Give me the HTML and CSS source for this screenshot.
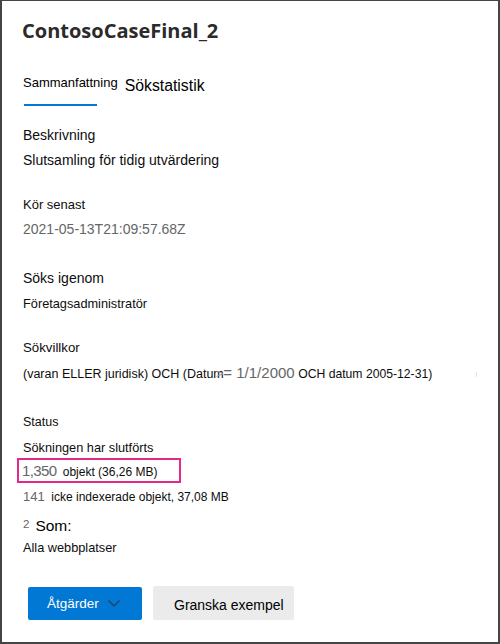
FILE: index.html
```html
<!DOCTYPE html>
<html lang="sv">
<head>
<meta charset="utf-8">
<title>ContosoCaseFinal_2</title>
<link rel="stylesheet" href="styles.css">
</head>
<body>
<div class="frame">
  <h1 class="title">ContosoCaseFinal_2</h1>
  <div class="tabs">
    <div class="tab tab-active">
      <span class="tab-label">Sammanfattning</span>
      <span class="tab-underline"></span>
    </div>
    <div class="tab tab-second">Sökstatistik</div>
  </div>

  <section class="field f-desc">
    <div class="line s14">Beskrivning</div>
    <div class="line s14">Slutsamling för tidig utvärdering</div>
  </section>

  <section class="field f-run">
    <div class="line s13">Kör senast</div>
    <div class="line s14 muted">2021-05-13T21:09:57.68Z</div>
  </section>

  <section class="field f-searched">
    <div class="line s14">Söks igenom</div>
    <div class="line s1275">Företagsadministratör</div>
  </section>

  <section class="field f-cond">
    <div class="line s1325">Sökvillkor</div>
    <div class="line query">(varan ELLER juridisk) OCH (Datum<span class="caret">&gt;</span><span class="q-big">= 1/1/2000</span> <span class="q-small">OCH datum 2005-12-31)</span><span class="tick"></span></div>
  </section>

  <section class="field f-status">
    <div class="line s125">Status</div>
    <div class="line s1275">Sökningen har slutförts</div>
    <div class="highlight"><span class="num">1,350</span> <span class="small">objekt (36,26 MB)</span></div>
    <div class="line s13 row-141"><span class="muted">141</span> <span class="small gap3">icke indexerade objekt, 37,08 MB</span></div>
    <div class="row-som"><span class="sup muted">2</span><span class="som">Som:</span></div>
    <div class="row-all">Alla webbplatser</div>
  </section>

  <div class="actions">
    <button class="btn btn-primary" type="button"><span class="btn-text">Åtgärder</span><svg class="chev" width="12" height="7" viewBox="0 0 12 7"><polyline points="0.5,0.5 6,6 11.5,0.5" fill="none" stroke="#2d3a52" stroke-width="1.1"/></svg></button>
    <button class="btn btn-default" type="button">Granska exempel</button>
  </div>
</div>
</body>
</html>
```

FILE: styles.css
```css
html, body {
  margin: 0;
  padding: 0;
  background: #ffffff;
}

body {
  font-family: "Liberation Sans", Arial, sans-serif;
  color: #0d0d0d;
}

.frame {
  width: 500px;
  height: 644px;
  box-sizing: border-box;
  border-top: 1px solid #444444;
  border-left: 2px solid #444444;
  border-right: 2px solid #444444;
  border-bottom: 2px solid #444444;
  padding: 16px 0 0 21px;
  overflow: hidden;
}

.title {
  margin: 0 0 0 -1px;
  font-family: "Open Sans", "Liberation Sans", sans-serif;
  font-weight: 700;
  font-size: 20px;
  line-height: 28px;
  color: #2b2b2b;
}

.tabs {
  margin-top: 29px;
  display: flex;
  align-items: flex-start;
  gap: 7px;
}

.tab-active {
  display: flex;
  flex-direction: column;
}

.tab-label {
  font-size: 13px;
  line-height: 18px;
  color: #000000;
}

.tab-underline {
  display: block;
  margin-top: 12px;
  margin-left: 1px;
  width: 73px;
  height: 2px;
  background: #0078d4;
}

.tab-second {
  padding-top: 3px;
  font-size: 15.8px;
  line-height: 18px;
  color: #000000;
}

.line {
  line-height: 25px;
}

.s14 { font-size: 14px; }
.s13 { font-size: 13px; }
.s1325 { font-size: 13.25px; }
.s1275 { font-size: 12.75px; }
.s125 { font-size: 12.5px; }

.muted { color: #666666; }

.f-desc { margin-top: 17px; }
.f-run { margin-top: 19px; }
.f-searched { margin-top: 24px; }
.f-cond { margin-top: 19px; }
.f-status { margin-top: 23px; }

.query {
  font-size: 12.5px;
  white-space: nowrap;
}

.caret {
  margin-left: -8px;
  font-size: 13px;
  color: #a0a0a0;
}

.q-big {
  font-size: 15px;
  color: #666666;
}

.q-small {
  font-size: 12.2px;
  line-height: 1;
}

.tick {
  display: inline-block;
  width: 1px;
  height: 5px;
  margin-left: 44px;
  background: #e4e4e4;
  vertical-align: 1px;
}

.highlight {
  margin: -2px 0 0 -6px;
  width: 164px;
  box-sizing: border-box;
  border: 2px solid #e3298a;
  padding-left: 3px;
  font-size: 15px;
  line-height: 21px;
  white-space: nowrap;
}

.num {
  color: #666666;
  letter-spacing: -0.6px;
}

.small {
  font-size: 12px;
  line-height: 1;
  color: #0d0d0d;
}

.highlight .small {
  margin-left: 2px;
}

.gap3 {
  margin-left: 3px;
}

.row-141 {
  margin-top: 1px;
  white-space: nowrap;
}

.row-som {
  margin-top: 4px;
  line-height: 22px;
  font-size: 15.5px;
}

.sup {
  font-size: 11.5px;
  vertical-align: 3px;
}

.som {
  margin-left: 6px;
  color: #000000;
}

.row-all {
  margin-top: 1px;
  font-size: 12.75px;
  line-height: 20px;
}

.actions {
  margin-top: 28px;
  margin-left: 5px;
  display: flex;
  align-items: flex-start;
  gap: 11px;
}

.btn {
  margin: 0;
  border: none;
  border-radius: 2px;
  font-family: "Liberation Sans", Arial, sans-serif;
  box-sizing: border-box;
  cursor: pointer;
}

.btn-primary {
  margin-top: 1px;
  width: 114px;
  height: 33px;
  padding: 1px 0 0 19px;
  display: flex;
  align-items: center;
  gap: 9px;
  background: #0078d4;
  color: #ffffff;
  font-size: 13.5px;
  line-height: 32px;
}

.chev {
  display: block;
  margin-top: -2px;
}

.btn-default {
  width: 141px;
  height: 34px;
  padding: 4px 0 0 21px;
  text-align: left;
  background: #ebebeb;
  color: #000000;
  font-size: 14px;
  line-height: 30px;
}
```
